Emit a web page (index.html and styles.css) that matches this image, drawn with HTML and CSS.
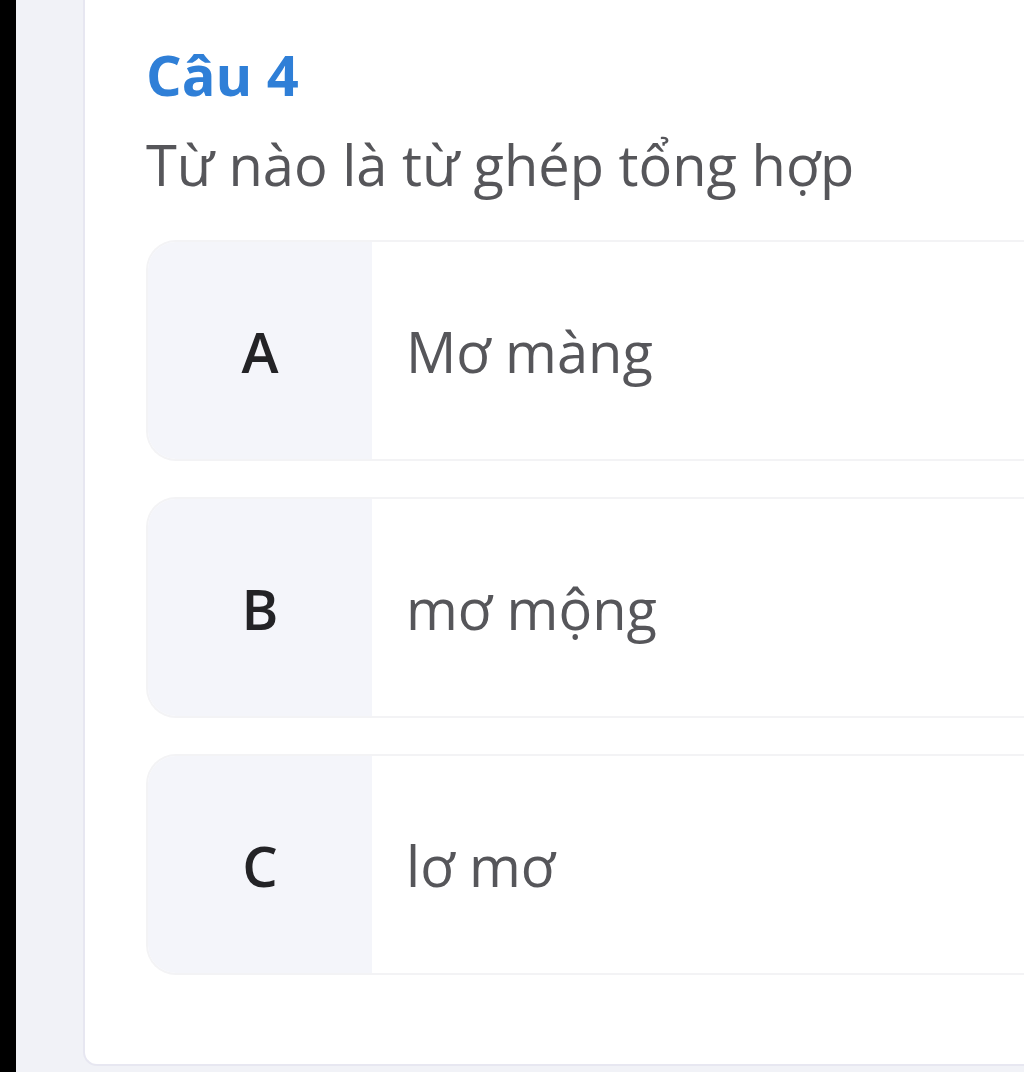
FILE: index.html
```html
<!DOCTYPE html>
<html lang="vi">
<head>
<meta charset="utf-8">
<link rel="stylesheet" href="styles.css">
</head>
<body>
<div class="strip"></div>
<main class="page">
  <section class="card">
    <h2 class="title">Câu 4</h2>
    <p class="question">Từ nào là từ ghép tổng hợp</p>
    <ul class="options">
      <li class="option"><span class="letter">A</span><span class="answer">Mơ màng</span></li>
      <li class="option"><span class="letter">B</span><span class="answer">mơ mộng</span></li>
      <li class="option"><span class="letter">C</span><span class="answer">lơ mơ</span></li>
    </ul>
  </section>
</main>
</body>
</html>
```
FILE: styles.css
```css
html, body {
  margin: 0;
  padding: 0;
  height: 100%;
  overflow: hidden;
}
body {
  display: flex;
  background: #f1f2f7;
  font-family: "Open Sans", "Noto Sans", sans-serif;
}
.strip {
  width: 16px;
  flex: 0 0 16px;
  background: #000;
}
.page {
  flex: 1;
  min-width: 0;
  padding-left: 67px;
  height: 1066px;
}
.card {
  box-sizing: border-box;
  width: 100%;
  height: 1066px;
  background: #fff;
  border: 2px solid #e7e7f1;
  border-top: none;
  border-right: none;
  border-radius: 0 0 0 14px;
  padding: 36px 0 0 61px;
}
.title {
  margin: 0;
  font-size: 56px;
  font-weight: 700;
  line-height: 76px;
  color: #2f7fd7;
}
.question {
  margin: 14px 0 0;
  font-size: 56px;
  font-weight: 400;
  line-height: 76px;
  color: #56565a;
}
.options {
  list-style: none;
  margin: 38px 0 0;
  padding: 0;
  display: flex;
  flex-direction: column;
  gap: 36px;
}
.option {
  display: flex;
  align-items: stretch;
  height: 221px;
  box-sizing: border-box;
  border: 2px solid #f3f3f5;
  border-right: none;
  border-radius: 30px 0 0 30px;
  overflow: hidden;
}
.letter {
  width: 224px;
  flex: 0 0 224px;
  display: flex;
  align-items: center;
  justify-content: center;
  background: #f4f5fa;
  font-size: 56px;
  font-weight: 600;
  color: #232326;
}
.answer {
  display: flex;
  align-items: center;
  padding-left: 34px;
  font-size: 56px;
  color: #56565a;
}
```
